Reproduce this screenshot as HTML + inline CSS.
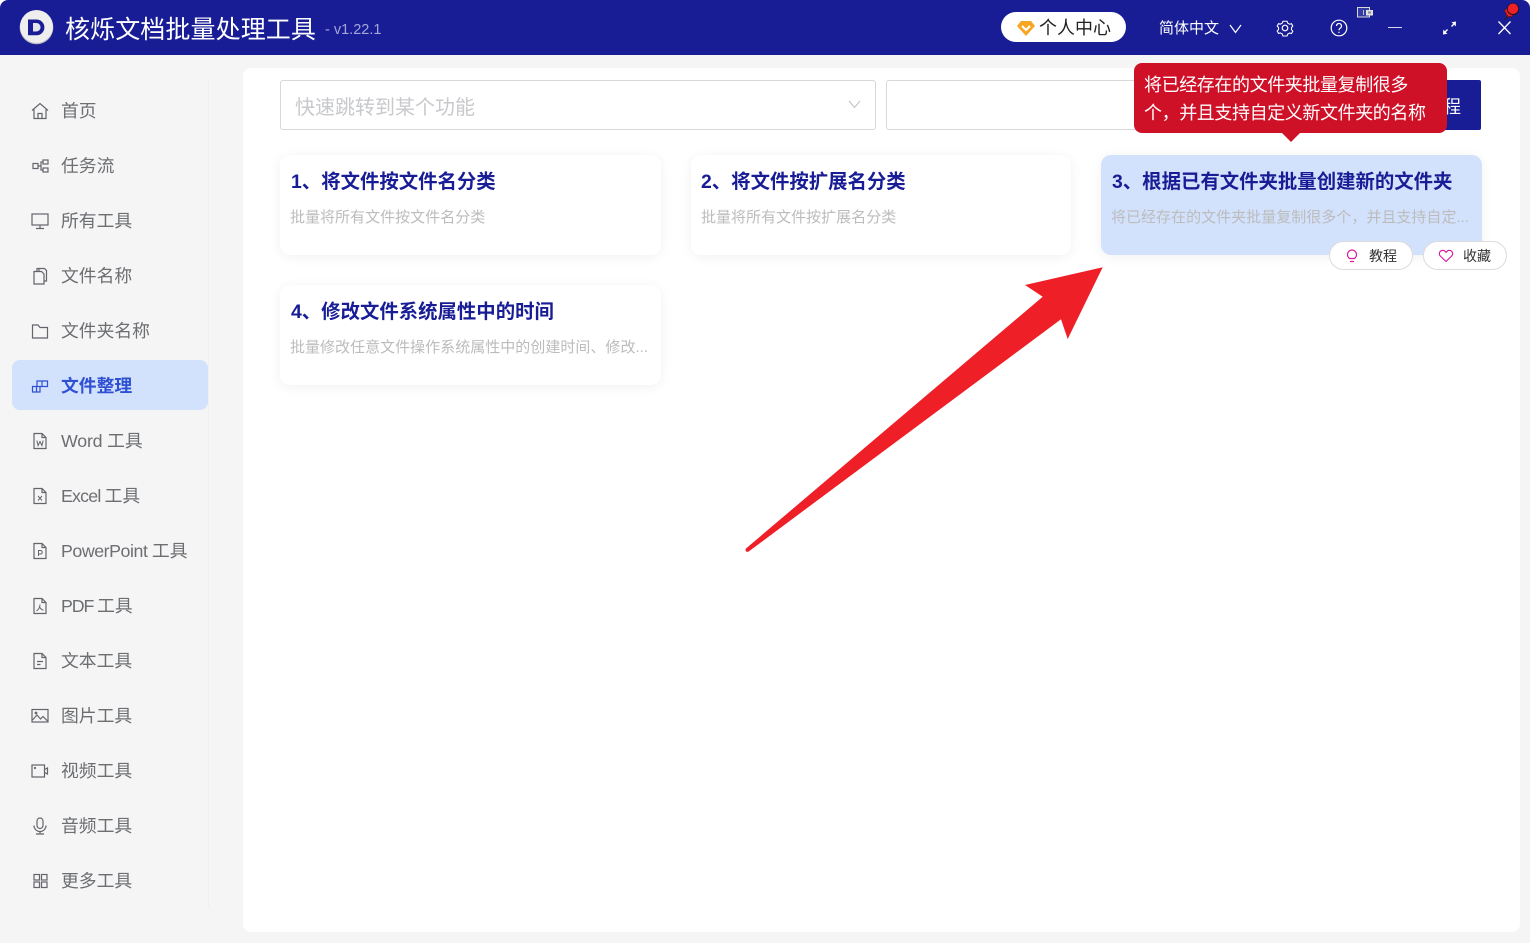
<!DOCTYPE html>
<html lang="zh-CN"><head><meta charset="utf-8"><title>核烁文档批量处理工具</title>
<style>
*{box-sizing:border-box}
html,body{margin:0;padding:0;width:1530px;height:943px;overflow:hidden;background:#f5f5f5;font-family:"Liberation Sans","Noto Sans CJK SC",sans-serif}
.abs{position:absolute;white-space:nowrap}
#top{position:absolute;left:0;top:0;width:1530px;height:55px;background:#181d96;border-radius:8px 8px 0 0}
#tb{position:absolute;left:0;top:0;width:1530px;height:20px;background:#fff}
#side{position:absolute;left:0;top:80px;width:209px;height:828px;border-right:1px solid #f0f0f0}
.it{position:absolute;left:61px;font-size:17.8px;line-height:26px;color:#6c6e72;white-space:nowrap}
.ic{position:absolute;left:30px;width:20px;height:20px;fill:none;stroke:#63656a;stroke-width:1.2}
#active{position:absolute;left:12px;top:360px;width:196px;height:50px;background:#d2e1fc;border-radius:8px}
#main{position:absolute;left:243px;top:68px;width:1277px;height:864px;background:#fff;border-radius:8px}
.card{position:absolute;width:381px;height:100px;background:#fff;border-radius:10px;box-shadow:0 2px 12px rgba(0,0,0,.06)}
.t{position:absolute;left:11px;top:12px;font-size:19.4px;line-height:30px;font-weight:700;color:#181d96;white-space:nowrap}
.d{position:absolute;left:10px;top:52px;font-size:15px;line-height:22px;color:#bcbcbc;white-space:nowrap;letter-spacing:.02px}
.pill{position:absolute;top:241px;width:84px;height:29px;border-radius:15px;background:#fff;border:1px solid #dcdcdc;font-size:14px;line-height:28px;color:#333}
</style></head><body>
<div id="tb"></div>
<div id="top"></div>
<svg class="abs" style="left:19px;top:9px" width="36" height="36" viewBox="0 0 36 36"><circle cx="17.500" cy="18.500" r="16.800" fill="#b9b9c4"/><circle cx="17.500" cy="17.500" r="16.500" fill="#eeeeee"/><path d="M9 10.500h8.500a7.800 7.800 0 0 1 0 15.800H9z" fill="#181d96"/><path d="M14 14h3.300a4.200 4.200 0 0 1 0 8.500H14z" fill="#e4e4ee"/></svg>
<div class="abs" style="left:65px;top:11px;font-size:25px;line-height:38px;color:#fff;letter-spacing:.1px">核烁文档批量处理工具</div>
<div class="abs" style="left:325px;top:20px;font-size:14.500px;line-height:20px;color:#a5a8d6">- v1.22.1</div>

<div class="abs" style="left:1001px;top:12px;width:125px;height:30px;border-radius:15px;background:#fff"></div>
<svg class="abs" style="left:1016px;top:19px" width="20" height="18" viewBox="0 0 20 18"><path d="M5 2h10l4 5-9 10L1 7z" fill="#f5a623"/><path d="M6 7l4 4 4-4" fill="none" stroke="#fff" stroke-width="2"/></svg>
<div class="abs" style="left:1039px;top:15px;font-size:18px;line-height:27px;color:#222">个人中心</div>
<div class="abs" style="left:1159px;top:18px;font-size:15px;line-height:22px;color:#fff">简体中文</div>
<svg class="abs" style="left:1228px;top:22px" width="15" height="14" viewBox="0 0 15 14" fill="none" stroke="#fff" stroke-width="1.200"><path d="M2 3l5.500 7.500L13 3"/></svg>
<svg class="abs" style="left:1275px;top:18px" width="20" height="20" viewBox="0 0 20 20" fill="none" stroke="#fff" stroke-width="1.200"><path d="M7.700 2.500h4.600l.7 2.100 2.100 1.200 2.100-.5 1.500 2.600-1.500 1.600v2.400l1.500 1.600-1.500 2.600-2.100-.5-2.100 1.200-.7 2.100H7.700L7 16.700l-2.100-1.200-2.100.5-1.500-2.600 1.500-1.600V9.400L1.300 7.800l1.500-2.600 2.100.5L7 4.500z" transform="translate(1 1) scale(.9)"/><circle cx="10" cy="10" r="2.800"/></svg>
<svg class="abs" style="left:1329px;top:18px" width="20" height="20" viewBox="0 0 20 20" fill="none" stroke="#fff" stroke-width="1.200"><circle cx="10" cy="10" r="7.800"/><path d="M7.500 8a2.500 2.500 0 1 1 3.800 2.100c-.9.600-1.300 1-1.300 2.200"/><path d="M10 13.800v1.200"/></svg>
<svg class="abs" style="left:1357px;top:7px" width="17" height="11" viewBox="0 0 17 11"><rect x=".5" y=".5" width="12" height="9.500" fill="#343aa6" stroke="#d8d8d8"/><rect x="6" y="3" width="1" height="5" fill="#bbb"/><rect x="9" y="3" width="7" height="5.500" fill="#e0e0e0"/><rect x="11" y="4.500" width="3" height="2" fill="#8a8a9a"/></svg>
<div class="abs" style="left:1388px;top:27px;width:14px;height:1.300px;background:#d8d9f0"></div>
<svg class="abs" style="left:1441px;top:19px" width="16" height="18" viewBox="0 0 16 18" fill="#fff"><path d="M15 2.500l-.3 5-1.500-1.700-2.200 2.200-1-1 2.200-2.200-1.700-1.500z"/><path d="M2 15.500l.3-5 1.500 1.700 2.200-2.200 1 1-2.200 2.200 1.700 1.500z"/></svg>
<svg class="abs" style="left:1496px;top:19px" width="17" height="17" viewBox="0 0 17 17" stroke="#fff" stroke-width="1.300"><path d="M2.500 2.500l12 12.500M14.500 2.500L2.500 15"/></svg>
<svg class="abs" style="left:1500px;top:1px" width="22" height="21" viewBox="0 0 22 21"><path d="M5 18.500l3-4" stroke="#222" stroke-width="1.500"/><path d="M4 9l5-2.500 6 6-3 3.500H7z" fill="#7a1016"/><path d="M5 9.500l4-2.500 5 5-2.500 3H8z" fill="#e0202a"/><circle cx="13" cy="8" r="6" fill="#111"/><circle cx="13" cy="7.800" r="5.300" fill="#ee2128"/></svg>

<div id="side"></div>
<div id="active"></div>
<svg class="ic" style="top:101px" viewBox="0 0 20 20"><path d="M2 9.500L10 2.500l8 7M4 8.500V17.500h12V8.500M8 17.500v-5h4v5"/></svg><div class="it" style="top:98px">首页</div>
<svg class="ic" style="top:156px" viewBox="0 0 20 20"><rect x="3" y="7.500" width="5" height="5"/><rect x="13" y="4" width="5" height="4"/><rect x="13" y="12" width="5" height="4"/><path d="M8 10h3V6h2M11 10v4h2"/></svg><div class="it" style="top:153px">任务流</div>
<svg class="ic" style="top:211px" viewBox="0 0 20 20"><rect x="2" y="3" width="16" height="11"/><path d="M10 14v3M6 17.500h8"/></svg><div class="it" style="top:208px">所有工具</div>
<svg class="ic" style="top:266px" viewBox="0 0 20 20"><path d="M7 5.500V2.500h7.500l2 2V15H14"/><path d="M4 5.500h7.500l2.500 2.500V18H4zM9 2.500V5"/></svg><div class="it" style="top:263px">文件名称</div>
<svg class="ic" style="top:321px" viewBox="0 0 20 20"><path d="M2.500 4h5.500l2 2.500h7.500v10.500H2.500z"/></svg><div class="it" style="top:318px">文件夹名称</div>
<svg class="ic" style="top:376px;stroke:#2f50d3" viewBox="0 0 20 20"><path d="M2.500 10.500H10V16H2.500zM7 10.500V5h10.500v5.500H10M12 5v5.500M6.500 10.500V16"/></svg><div class="it" style="top:373px;color:#2f50d3;font-weight:700">文件整理</div>
<svg class="ic" style="top:431px" viewBox="0 0 20 20"><path d="M4 2.500h8l4 4v11H4zM12 2.500v4h4"/><path d="M6.800 9.500l1.300 5 1.900-4 1.900 4 1.300-5" stroke-width="1"/></svg><div class="it" style="top:428px"><span style="letter-spacing:-.2px">Word </span>工具</div>
<svg class="ic" style="top:486px" viewBox="0 0 20 20"><path d="M4 2.500h8l4 4v11H4zM12 2.500v4h4"/><path d="M8 10l4 4.500M12 10l-4 4.500" stroke-width="1"/></svg><div class="it" style="top:483px"><span style="letter-spacing:-.8px">Excel </span>工具</div>
<svg class="ic" style="top:541px" viewBox="0 0 20 20"><path d="M4 2.500h8l4 4v11H4zM12 2.500v4h4"/><path d="M8.500 15V9.500h2a1.700 1.700 0 0 1 0 3.500h-2" stroke-width="1"/></svg><div class="it" style="top:538px"><span style="letter-spacing:-.45px">PowerPoint </span>工具</div>
<svg class="ic" style="top:596px" viewBox="0 0 20 20"><path d="M4 2.500h8l4 4v11H4zM12 2.500v4h4"/><path d="M10 8.500c0 3-1.500 5-3.500 6.500M10 11.500c.8 1.500 2 2.300 3.500 2.800" stroke-width="1"/></svg><div class="it" style="top:593px"><span style="letter-spacing:-1.100px">PDF </span>工具</div>
<svg class="ic" style="top:651px" viewBox="0 0 20 20"><path d="M4 2.500h8l4 4v11H4zM12 2.500v4h4M7 10.500h6M7 13.500h3.500"/></svg><div class="it" style="top:648px">文本工具</div>
<svg class="ic" style="top:706px" viewBox="0 0 20 20"><rect x="2" y="3.500" width="16" height="12.500"/><path d="M2.500 14l4.500-5 3.500 4 2.500-2.500 4.500 4.500"/><circle cx="6" cy="7" r=".8"/></svg><div class="it" style="top:703px">图片工具</div>
<svg class="ic" style="top:761px" viewBox="0 0 20 20"><rect x="2" y="4" width="12.500" height="12"/><path d="M14.500 8.500l3-1.500v6l-3-1.500"/><circle cx="5" cy="7" r=".5"/></svg><div class="it" style="top:758px">视频工具</div>
<svg class="ic" style="top:816px" viewBox="0 0 20 20"><rect x="7" y="2" width="6" height="10.500" rx="3"/><path d="M4 9.500a6 6 0 0 0 12 0M10 15.500v2.500M6 18h8"/></svg><div class="it" style="top:813px">音频工具</div>
<svg class="ic" style="top:871px" viewBox="0 0 20 20"><rect x="4" y="3.500" width="5.500" height="5.500"/><rect x="11.500" y="3.500" width="5.500" height="5.500"/><rect x="4" y="11" width="5.500" height="5.500"/><rect x="11.500" y="11" width="5.500" height="5.500"/></svg><div class="it" style="top:868px">更多工具</div>

<div id="main"></div>
<div class="abs" style="left:280px;top:80px;width:596px;height:50px;border:1px solid #d8d8d8;border-radius:3px;background:#fff"></div>
<div class="abs" style="left:295px;top:93px;font-size:20px;line-height:30px;color:#c8c9cc">快速跳转到某个功能</div>
<svg class="abs" style="left:846px;top:98px" width="17" height="14" viewBox="0 0 17 14" fill="none" stroke="#c4c6cc" stroke-width="1.200"><path d="M3 3l5.500 6.500L14 3"/></svg>
<div class="abs" style="left:886px;top:80px;width:300px;height:50px;border:1px solid #d8d8d8;border-radius:3px;background:#fff"></div>
<div class="abs" style="left:1380px;top:80px;width:101px;height:50px;border-radius:2px;background:#181d96;color:#fff;font-size:18px;line-height:54px;padding-left:63px">程</div>

<div class="card" style="left:280px;top:155px"><div class="t">1、将文件按文件名分类</div><div class="d">批量将所有文件按文件名分类</div></div>
<div class="card" style="left:691px;top:155px;width:380px"><div class="t" style="left:10px">2、将文件按扩展名分类</div><div class="d">批量将所有文件按扩展名分类</div></div>
<div class="card" style="left:1101px;top:155px;background:#d2e1fc"><div class="t">3、根据已有文件夹批量创建新的文件夹</div><div class="d">将已经存在的文件夹批量复制很多个，并且支持自定...</div></div>
<div class="card" style="left:280px;top:285px"><div class="t">4、修改文件系统属性中的时间</div><div class="d">批量修改任意文件操作系统属性中的创建时间、修改...</div></div>

<div class="pill" style="left:1329px"><svg class="abs" style="left:15px;top:6px" width="14" height="16" viewBox="0 0 14 16" fill="none" stroke="#d6189a" stroke-width="1.200"><path d="M4.500 10.500C3 9.300 2.500 8 2.500 6.500a4.500 4.500 0 0 1 9 0c0 1.500-.5 2.800-2 4z"/><path d="M5 13.500h4"/></svg><span class="abs" style="left:39px;top:0">教程</span></div>
<div class="pill" style="left:1423px"><svg class="abs" style="left:14px;top:7px" width="16" height="14" viewBox="0 0 16 14" fill="none" stroke="#d6189a" stroke-width="1.100"><path d="M8 12.500L2.300 7a3.300 3.300 0 0 1 4.700-4.700l1 1 1-1A3.300 3.300 0 0 1 13.700 7z"/></svg><span class="abs" style="left:39px;top:0">收藏</span></div>

<svg class="abs" style="left:0;top:0;pointer-events:none" width="1530" height="943"><path d="M1102.700 267.300L1025 285l17.700 11.700L746 548.500q-1 1.500 0 2.700 1.300 1 2.500.4L1061 319.300l6.700 19.700z" fill="#ee1f26"/></svg>

<div class="abs" style="left:1134px;top:63px;width:313px;height:70px;background:#cf1128;border-radius:8px"></div>
<div class="abs" style="left:1144px;top:71px;font-size:18px;line-height:28px;color:#fff;letter-spacing:-.4px">将已经存在的文件夹批量复制很多</div>
<div class="abs" style="left:1144px;top:99px;font-size:18px;line-height:28px;color:#fff;letter-spacing:-.4px">个，并且支持自定义新文件夹的名称</div>
<svg class="abs" style="left:1281px;top:132px" width="20" height="11" viewBox="0 0 20 11"><path d="M0 0h20l-10 10z" fill="#cf1128"/></svg>
</body></html>
